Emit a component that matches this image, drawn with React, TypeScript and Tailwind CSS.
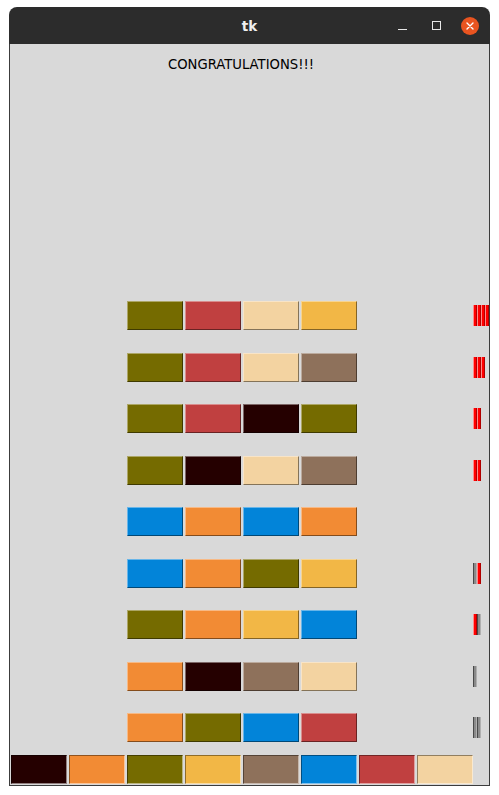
const C: Record<string, string> = {
  maroon: "bg-[#250000]",
  orange: "bg-[#f28b34]",
  olive: "bg-[#756b00]",
  yellow: "bg-[#f2b746]",
  brown: "bg-[#8e715b]",
  blue: "bg-[#0284d9]",
  red: "bg-[#c04040]",
  wheat: "bg-[#f3d3a1]",
};

type Peg = "hit" | "near";

const guesses: { colors: string[]; pegs: Peg[] }[] = [
  { colors: ["olive", "red", "wheat", "yellow"], pegs: ["hit", "hit", "hit", "hit"] },
  { colors: ["olive", "red", "wheat", "brown"], pegs: ["hit", "hit", "hit"] },
  { colors: ["olive", "red", "maroon", "olive"], pegs: ["hit", "hit"] },
  { colors: ["olive", "maroon", "wheat", "brown"], pegs: ["hit", "hit"] },
  { colors: ["blue", "orange", "blue", "orange"], pegs: [] },
  { colors: ["blue", "orange", "olive", "yellow"], pegs: ["near", "hit"] },
  { colors: ["olive", "orange", "yellow", "blue"], pegs: ["hit", "near"] },
  { colors: ["orange", "maroon", "brown", "wheat"], pegs: ["near"] },
  { colors: ["orange", "olive", "blue", "red"], pegs: ["near", "near"] },
];

const palette = ["maroon", "orange", "olive", "yellow", "brown", "blue", "red", "wheat"];

function Box({ color, sunken }: { color: string; sunken?: boolean }) {
  return (
    <div
      className={`w-[56px] h-[29px] shrink-0 border ${C[color]} ${
        sunken
          ? "border-t-black/40 border-l-black/40 border-b-white/50 border-r-white/50"
          : "border-t-white/40 border-l-white/40 border-b-black/45 border-r-black/45"
      }`}
    />
  );
}

function FeedbackPeg({ kind }: { kind: Peg }) {
  if (kind === "hit") {
    return (
      <div className="w-[4px] h-[21px] bg-[#ff0000] border-l border-l-[#ff8a8a] border-r border-r-[#b00000]" />
    );
  }
  return (
    <div className="w-[4px] h-[21px] bg-[#8a8a8a] border-l border-l-[#4a4a4a] border-r border-r-[#b0b0b0]" />
  );
}

export default function App() {
  return (
    <div className="w-[499px] h-[795px] bg-white pt-[7px] pl-[9px]">
      <div className="w-[481px] rounded-t-[8px] overflow-hidden">
        {/* title bar */}
        <div className="relative h-[37px] bg-[#2c2c2c] flex items-center justify-center">
          <span
            className="text-[13.5px] font-bold text-[#f0f0f0] pt-[1px]"
            style={{ fontFamily: '"DejaVu Sans", sans-serif' }}
          >
            tk
          </span>
          <div className="absolute right-[11px] top-0 h-full flex items-center">
            <div className="w-[9px] h-[1.5px] bg-[#e8e8e8] mt-[8px] mr-[25px]" />
            <div className="w-[9px] h-[9px] border-[1.5px] border-[#e8e8e8] mr-[20px]" />
            <div className="w-[18px] h-[18px] rounded-full bg-[#e95420] flex items-center justify-center">
              <svg width="8" height="8" viewBox="0 0 8 8">
                <path d="M1 1 L7 7 M7 1 L1 7" stroke="#fff" strokeWidth="1.4" strokeLinecap="round" />
              </svg>
            </div>
          </div>
        </div>

        {/* content */}
        <div
          className="bg-[#d9d9d9] border-x border-b border-[#3c3c3c] pt-[13px] pb-[1px]"
          style={{ fontFamily: '"DejaVu Sans", sans-serif' }}
        >
          <div className="w-[462px] h-[16px] leading-[16px] text-center text-[13.2px] text-black">
            CONGRATULATIONS!!!
          </div>

          <div className="mt-[228px] flex flex-col gap-[22.5px]">
            {guesses.map((g, i) => (
              <div key={i} className="flex items-center h-[29px] pl-[117px]">
                <div className="flex gap-[2px]">
                  {g.colors.map((c, j) => (
                    <Box key={j} color={c} />
                  ))}
                </div>
                <div className="ml-auto w-[16px] flex">
                  {g.pegs.map((p, j) => (
                    <FeedbackPeg key={j} kind={p} />
                  ))}
                </div>
              </div>
            ))}
          </div>

          <div className="mt-[13px] pl-[1px] flex gap-[2px]">
            {palette.map((c) => (
              <Box key={c} color={c} sunken />
            ))}
          </div>
        </div>
      </div>
    </div>
  );
}
